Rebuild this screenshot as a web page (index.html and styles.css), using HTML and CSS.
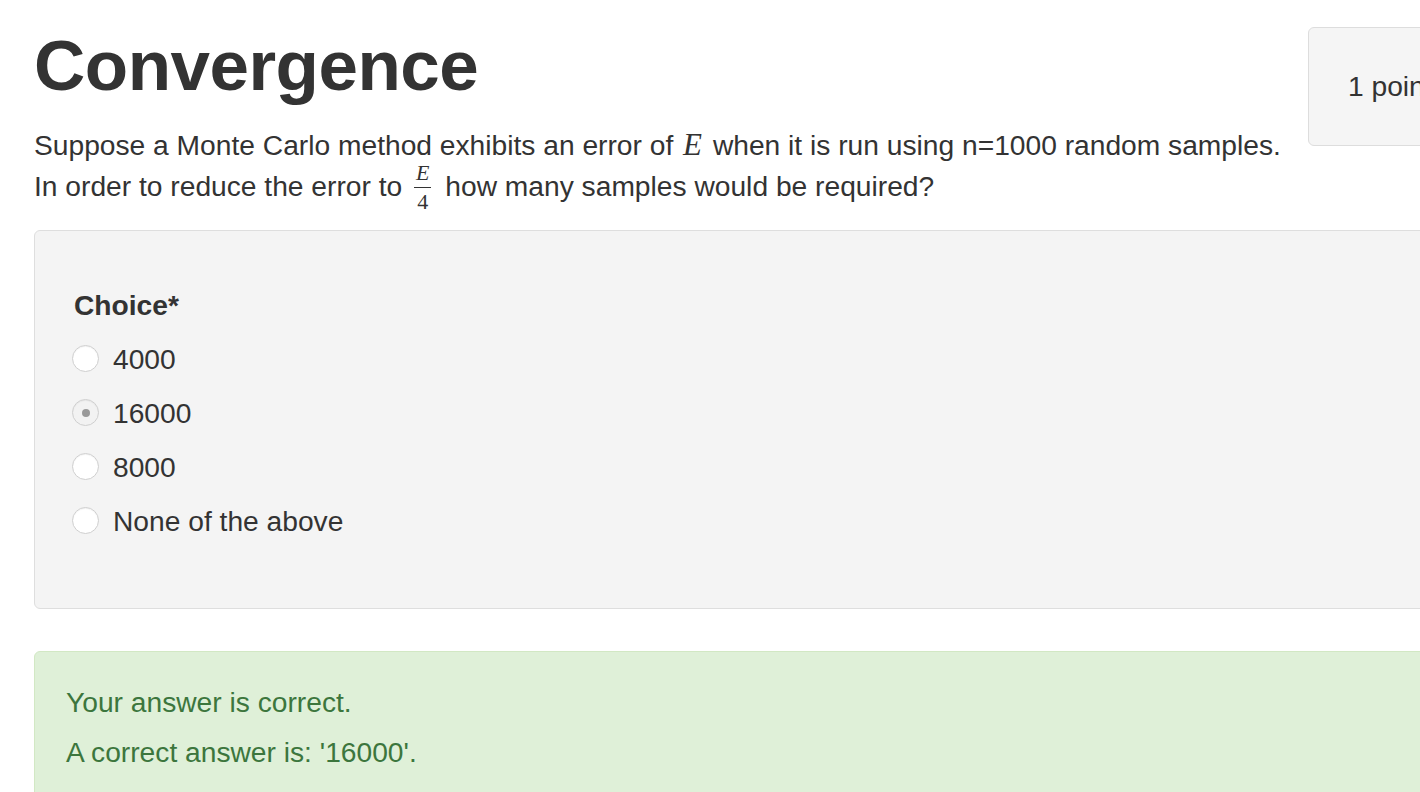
FILE: index.html
```html
<!DOCTYPE html>
<html lang="en">
<head>
<meta charset="utf-8">
<title>Convergence</title>
<link rel="stylesheet" href="styles.css">
</head>
<body>
<div class="page">
  <div class="header-row">
    <div class="question-head">
      <h1 class="title">Convergence</h1>
      <p class="prompt">Suppose a Monte Carlo method exhibits an error of <span class="math">E</span> when it is run using n=1000 random samples.<br>In order to reduce the error to <span class="frac"><span class="num">E</span><span class="den">4</span></span> how many samples would be required?</p>
    </div>
    <aside class="points-card">1 point</aside>
  </div>

  <div class="choice-card">
    <div class="choice-label">Choice*</div>
    <div class="options">
      <div class="option"><span class="radio"></span><span>4000</span></div>
      <div class="option"><span class="radio checked"></span><span>16000</span></div>
      <div class="option"><span class="radio"></span><span>8000</span></div>
      <div class="option"><span class="radio"></span><span>None of the above</span></div>
    </div>
  </div>

  <div class="alert-success">
    <p>Your answer is correct.</p>
    <p>A correct answer is: '16000'.</p>
  </div>
</div>
</body>
</html>
```

FILE: styles.css
```css
html, body {
  margin: 0;
  padding: 0;
  overflow: hidden;
  background: #ffffff;
}

body {
  font-family: "Liberation Sans", Arial, sans-serif;
  font-size: 28.2px;
  line-height: 40.5px;
  color: #333333;
}

.page {
  width: 1600px;
  padding-left: 34px;
}

.header-row {
  display: grid;
  grid-template-columns: 1274px 300px;
  align-items: start;
}

.title {
  margin: 23px 0 0 0;
  font-size: 71px;
  line-height: 1.2;
  font-weight: 700;
  letter-spacing: -0.5px;
  color: #333333;
}

.prompt {
  margin: 17px 0 0 0;
  white-space: nowrap;
}

.math {
  font-family: "Liberation Serif", "DejaVu Serif", serif;
  font-style: italic;
  font-size: 31px;
  padding: 0 3px 0 2px;
}

.frac {
  display: inline-flex;
  flex-direction: column;
  align-items: center;
  vertical-align: 16px;
  line-height: 1;
  margin: -7px 6px -7px 4px;
  font-family: "Liberation Serif", "DejaVu Serif", serif;
  font-size: 22px;
}

.frac .num {
  font-style: italic;
  padding: 0 2px 3px;
  border-bottom: 1.5px solid #333333;
}

.frac .den {
  padding-top: 3px;
}

.points-card {
  margin-top: 27px;
  height: 119px;
  box-sizing: border-box;
  padding: 0 39px;
  display: flex;
  align-items: center;
  background: #f5f5f5;
  border: 1px solid #dddddd;
  border-radius: 6px;
  white-space: nowrap;
}

.choice-card {
  margin-top: 24px;
  height: 379px;
  box-sizing: border-box;
  background: #f4f4f4;
  border: 1px solid #dedede;
  border-radius: 6px;
  padding: 54px 40px 0 39px;
}

.choice-label {
  font-weight: 700;
}

.options {
  margin-top: 13px;
  display: flex;
  flex-direction: column;
  gap: 13.5px;
}

.option {
  display: flex;
  align-items: center;
  gap: 14px;
}

.radio {
  width: 27px;
  height: 27px;
  box-sizing: border-box;
  margin-left: -2px;
  border-radius: 50%;
  border: 1px solid #cfcfcf;
  background: #ffffff;
  box-shadow: inset 0 1px 1px rgba(0, 0, 0, 0.05);
  display: flex;
  align-items: center;
  justify-content: center;
  flex-shrink: 0;
}

.radio.checked {
  background: #f2f2f2;
}

.radio.checked::after {
  content: "";
  width: 8px;
  height: 8px;
  border-radius: 50%;
  background: #999999;
}

.alert-success {
  margin-top: 42px;
  height: 200px;
  box-sizing: border-box;
  background: #dff0d8;
  border: 1px solid #d2e8c4;
  border-radius: 6px;
  color: #3c763d;
  padding: 30px 31px;
}

.alert-success p {
  margin: 0 0 9.5px 0;
}
```
